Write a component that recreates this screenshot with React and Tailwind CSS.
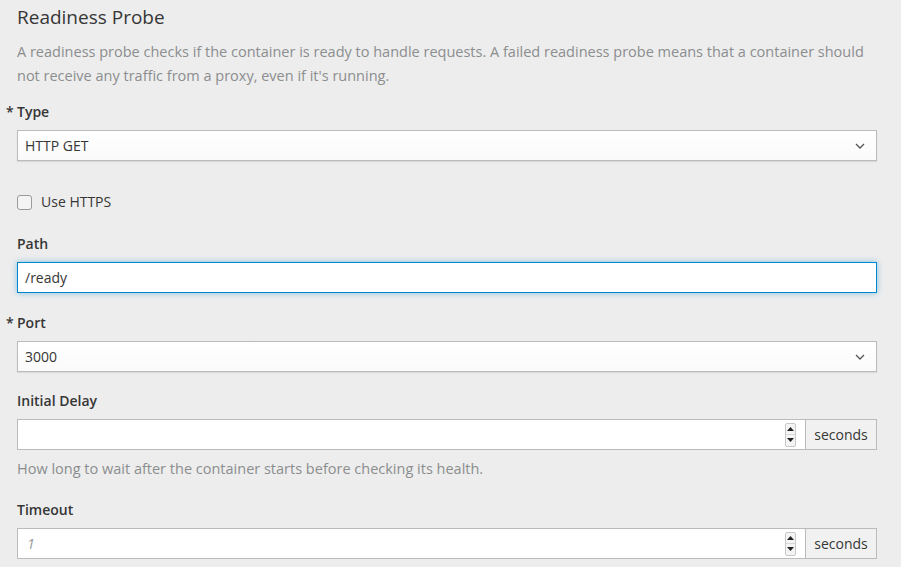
import React from 'react';

function Caret() {
  return (
    <svg width="10" height="6" viewBox="0 0 10 6" className="text-[#555]">
      <path d="M1 1l4 4 4-4" fill="none" stroke="currentColor" strokeWidth="1.3" />
    </svg>
  );
}

function Spinner() {
  return (
    <div className="flex flex-col w-[11px] h-[24px] border border-[#c8c8c8] rounded-[2px] bg-[#f4f4f4] mr-[9px]">
      <div className="flex-1 flex items-center justify-center border-b border-[#d8d8d8]">
        <svg width="7" height="4" viewBox="0 0 7 4"><path d="M0 4L3.5 0 7 4z" fill="#222" /></svg>
      </div>
      <div className="flex-1 flex items-center justify-center">
        <svg width="7" height="4" viewBox="0 0 7 4"><path d="M0 0h7L3.5 4z" fill="#222" /></svg>
      </div>
    </div>
  );
}

function Label({ children, required }) {
  return (
    <div className="relative text-[14px] font-semibold text-[#363636] leading-[20px] mb-[8px]">
      {required && <span className="absolute left-[-11px] top-0">*</span>}
      {children}
    </div>
  );
}

function SelectBox({ value }) {
  return (
    <div className="h-[31px] flex items-center justify-between pl-[7px] pr-[8px] bg-gradient-to-b from-white to-[#fafafa] border border-[#bbbbbb] shadow-[0_1px_1px_rgba(0,0,0,0.08)] text-[14px] text-[#363636]">
      <span>{value}</span>
      <span className="mr-[3px] mt-[1px]"><Caret /></span>
    </div>
  );
}

function SecondsInput({ placeholder }) {
  return (
    <div className="flex h-[31px]">
      <div className="flex-1 flex items-center justify-between bg-white border border-[#bbbbbb] pl-[9px]">
        <span className="text-[14px] italic text-[#999]">{placeholder}</span>
        <Spinner />
      </div>
      <div className="w-[71px] flex items-center justify-center bg-[#f1f1f1] border border-l-0 border-[#bbbbbb] text-[14px] text-[#363636]">
        seconds
      </div>
    </div>
  );
}

export default function App() {
  return (
    <div className="min-h-[567px] w-[901px] overflow-hidden bg-[#ededed] px-[17px] pr-[24px] pt-[5px] font-['Open_Sans',sans-serif]">
      <h2 className="text-[19px] leading-[24px] text-[#363636]">Readiness Probe</h2>
      <p className="mt-[11px] text-[14.5px] leading-[24px] text-[#8b8d8f]">
        A readiness probe checks if the container is ready to handle requests. A failed readiness probe means that a container should not receive any traffic from a proxy, even if it's running.
      </p>

      <div className="mt-[14px]">
        <Label required>Type</Label>
        <SelectBox value="HTTP GET" />
      </div>

      <label className="mt-[31px] flex items-center gap-[9px] text-[14px] text-[#363636] leading-[20px]">
        <span className="w-[15px] h-[15px] rounded-[3px] border border-[#9a9a9a] bg-[#f4f4f4]" />
        Use HTTPS
      </label>

      <div className="mt-[22px]">
        <Label>Path</Label>
        <div className="h-[31px] flex items-center pl-[7px] pr-[8px] bg-white border border-[#0088ce] shadow-[0_0_6px_rgba(0,136,206,0.45)] text-[14px] text-[#363636]">
          /ready
        </div>
      </div>

      <div className="mt-[20px]">
        <Label required>Port</Label>
        <SelectBox value="3000" />
      </div>

      <div className="mt-[19px]">
        <Label>Initial Delay</Label>
        <SecondsInput placeholder="" />
        <p className="mt-[9px] text-[14.5px] leading-[20px] text-[#8b8d8f]">How long to wait after the container starts before checking its health.</p>
      </div>

      <div className="mt-[21px]">
        <Label>Timeout</Label>
        <SecondsInput placeholder="1" />
      </div>
    </div>
  );
}
